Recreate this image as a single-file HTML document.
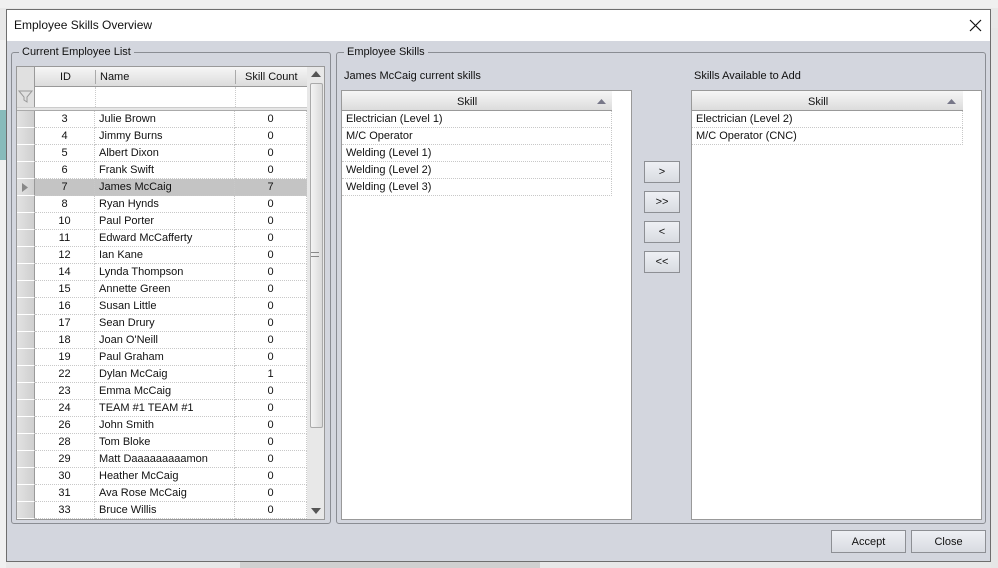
<!DOCTYPE html>
<html><head><meta charset="utf-8"><style>
*{margin:0;padding:0;box-sizing:border-box}
body{width:998px;height:568px;overflow:hidden;background:#e8e8e8;font-family:"Liberation Sans",sans-serif;font-size:11px;color:#111;position:relative}
.a{position:absolute}
.dlg{left:6px;top:9px;width:985px;height:553px;background:#d3d6de;border:1px solid #6e6e6e}
.title{left:0;top:0;width:983px;height:31px;background:#fff;font-size:12px}
.grp{border:1px solid #8a8d93;border-radius:3px}
.legend{background:#d3d6de;padding:0 3px;font-size:11px}
.hdr{background:linear-gradient(#f6f6f6,#dcdcdc);border-bottom:1px solid #999;height:20px}
.cell{position:absolute;height:17px;line-height:17px;border-bottom:1px dotted #c8c8c8;border-right:1px dotted #c8c8c8;white-space:nowrap;overflow:hidden}
.ind{position:absolute;left:0;width:18px;height:17px;background:linear-gradient(90deg,#e2e2e2,#cfcfcf);border-bottom:1px solid #fff;border-right:1px solid #999}
.btn{position:absolute;background:linear-gradient(#eef0f4,#d8dbe1);border:1px solid #8d8f94;text-align:center;font-size:11px}
</style></head><body>
<div class="a" style="left:0;top:0;width:998px;height:8px;background:#f0f0f0"></div>
<div class="a" style="left:0;top:40px;width:6px;height:528px;background:#f0f0f0"></div>
<div class="a" style="left:0;top:110px;width:6px;height:50px;background:#8bb"></div>
<div class="a" style="left:991px;top:28px;width:7px;height:540px;background:#e6e6e6"></div>
<div class="a" style="left:240px;top:562px;width:300px;height:6px;background:#d0d0d0"></div>

<div class="a dlg">
 <div class="a title"><span class="a" style="left:7px;top:8px">Employee Skills Overview</span>
  <svg class="a" style="left:962px;top:9px" width="13" height="13"><path d="M1 1L12 12M12 1L1 12" stroke="#111" stroke-width="1.2"/></svg></div>
</div>

<!-- Left group -->
<div class="a grp" style="left:11px;top:52px;width:320px;height:472px"></div>
<div class="a legend" style="left:19px;top:46px">Current Employee List</div>
<div class="a" style="left:16px;top:66px;width:309px;height:454px;background:#fff;border:1px solid #999;overflow:hidden">
 <div class="a hdr" style="left:0;top:0;width:290px"></div>
 <div class="a" style="left:0;top:0;width:18px;height:20px;background:#e0e0e0;border-right:1px solid #999"></div>
 <div class="a" style="left:43px;top:4px">ID</div>
 <div class="a" style="left:78px;top:3px;width:1px;height:14px;background:#aaa"></div>
 <div class="a" style="left:83px;top:4px">Name</div>
 <div class="a" style="left:218px;top:3px;width:1px;height:14px;background:#aaa"></div>
 <div class="a" style="left:228px;top:4px">Skill Count</div>
 <div class="a" style="left:0;top:20px;width:18px;height:20px;background:#e0e0e0;border-right:1px solid #999"></div>
 <svg class="a" style="left:1px;top:23px" width="15" height="13"><path d="M1 1H14L9 7V12L6 10V7Z" fill="none" stroke="#999"/></svg>
 <div class="a" style="left:78px;top:20px;width:1px;height:20px;border-left:1px dotted #ccc"></div>
 <div class="a" style="left:218px;top:20px;width:1px;height:20px;border-left:1px dotted #ccc"></div>
 <div class="a" style="left:0;top:40px;width:290px;height:4px;background:#e6e6e6;border-top:1px solid #ccc;border-bottom:1px solid #aaa"></div>
 <div class="a" style="left:290px;top:0;width:18px;height:454px;background:#e8e8e8"></div>
 <div class="a" style="left:293px;top:16px;width:13px;height:345px;background:linear-gradient(90deg,#f4f4f4,#dadada);border:1px solid #aaa;border-radius:2px"></div>
 <svg class="a" style="left:294px;top:4px" width="10" height="6"><path d="M0 6L5 0L10 6Z" fill="#555"/></svg>
 <svg class="a" style="left:294px;top:441px" width="10" height="6"><path d="M0 0L5 6L10 0Z" fill="#555"/></svg>
 <div class="a" style="left:294px;top:185px;width:8px;height:5px;border-top:1px solid #888;border-bottom:1px solid #888"></div>
 <div class="a" id="rows" style="left:0;top:44px;width:290px;height:410px"></div>
</div>

<!-- Right group -->
<div class="a grp" style="left:336px;top:52px;width:650px;height:472px"></div>
<div class="a legend" style="left:344px;top:46px">Employee Skills</div>
<div class="a" style="left:344px;top:70px">James McCaig current skills</div>
<div class="a" style="left:694px;top:70px">Skills Available to Add</div>

<div class="a" style="left:341px;top:90px;width:291px;height:430px;background:#fff;border:1px solid #999">
 <div class="a hdr" style="left:0;top:0;width:270px"></div>
 <div class="a" style="left:115px;top:5px">Skill</div>
 <svg class="a" style="left:255px;top:8px" width="9" height="5"><path d="M0 5L4.5 0L9 5Z" fill="#778"/></svg>
 <div class="cell" style="left:0;top:20px;width:270px;padding-left:4px">Electrician (Level 1)</div>
 <div class="cell" style="left:0;top:37px;width:270px;padding-left:4px">M/C Operator</div>
 <div class="cell" style="left:0;top:54px;width:270px;padding-left:4px">Welding (Level 1)</div>
 <div class="cell" style="left:0;top:71px;width:270px;padding-left:4px">Welding (Level 2)</div>
 <div class="cell" style="left:0;top:88px;width:270px;padding-left:4px">Welding (Level 3)</div>
</div>
<div class="a" style="left:691px;top:90px;width:291px;height:430px;background:#fff;border:1px solid #999">
 <div class="a hdr" style="left:0;top:0;width:271px"></div>
 <div class="a" style="left:116px;top:5px">Skill</div>
 <svg class="a" style="left:255px;top:8px" width="9" height="5"><path d="M0 5L4.5 0L9 5Z" fill="#778"/></svg>
 <div class="cell" style="left:0;top:20px;width:271px;padding-left:4px">Electrician (Level 2)</div>
 <div class="cell" style="left:0;top:37px;width:271px;padding-left:4px">M/C Operator (CNC)</div>
</div>

<div class="btn" style="left:644px;top:161px;width:36px;height:22px;line-height:21px">&gt;</div>
<div class="btn" style="left:644px;top:191px;width:36px;height:22px;line-height:21px">&gt;&gt;</div>
<div class="btn" style="left:644px;top:221px;width:36px;height:22px;line-height:21px">&lt;</div>
<div class="btn" style="left:644px;top:251px;width:36px;height:22px;line-height:21px">&lt;&lt;</div>
<div class="btn" style="left:831px;top:530px;width:75px;height:23px;line-height:22px">Accept</div>
<div class="btn" style="left:911px;top:530px;width:75px;height:23px;line-height:22px">Close</div>

<script>
var d=[[3,"Julie Brown",0],[4,"Jimmy Burns",0],[5,"Albert Dixon",0],[6,"Frank Swift",0],[7,"James McCaig",7],[8,"Ryan Hynds",0],[10,"Paul Porter",0],[11,"Edward McCafferty",0],[12,"Ian Kane",0],[14,"Lynda Thompson",0],[15,"Annette Green",0],[16,"Susan Little",0],[17,"Sean Drury",0],[18,"Joan O'Neill",0],[19,"Paul Graham",0],[22,"Dylan McCaig",1],[23,"Emma McCaig",0],[24,"TEAM #1 TEAM #1",0],[26,"John Smith",0],[28,"Tom Bloke",0],[29,"Matt Daaaaaaaaamon",0],[30,"Heather McCaig",0],[31,"Ava Rose McCaig",0],[33,"Bruce Willis",0]];
var h="";d.forEach(function(r,i){var t=i*17,s=r[0]==7?"background:#c4c4c4;":"";
h+='<div class="ind" style="top:'+t+'px">'+(r[0]==7?'<svg style="position:absolute;left:5px;top:4px" width="6" height="9"><path d="M0 0L6 4.5L0 9Z" fill="#888"/></svg>':'')+'</div>';
h+='<div class="cell" style="'+s+'left:18px;top:'+t+'px;width:60px;text-align:center">'+r[0]+'</div>';
h+='<div class="cell" style="'+s+'left:78px;top:'+t+'px;width:140px;padding-left:4px">'+r[1]+'</div>';
h+='<div class="cell" style="'+s+'left:218px;top:'+t+'px;width:72px;text-align:center">'+r[2]+'</div>';});
document.getElementById("rows").innerHTML=h;
</script>
</body></html>
